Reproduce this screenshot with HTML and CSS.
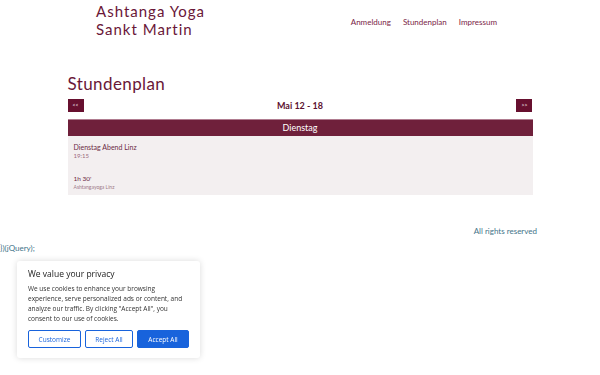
FILE: index.html
```html
<!DOCTYPE html>
<html lang="de">
<head>
	<meta charset="UTF-8">
	<title>Stundenplan - Ashtanga Yoga Sankt Martin</title>
	<link rel="stylesheet" href="styles.css">
</head>
<body>
	<header class="site_header">
		<a class="logo">
			<span>Ashtanga Yoga</span>
			<span>Sankt Martin</span>
		</a>
		<nav class="main_nav">
			<a>Anmeldung</a>
			<a>Stundenplan</a>
			<a>Impressum</a>
		</nav>
	</header>

	<main class="content">
		<h1>Stundenplan</h1>
		<div class="week_nav">
			<a class="week_btn">&lt;&lt;</a>
			<span class="week_label">Mai 12 - 18</span>
			<a class="week_btn">&gt;&gt;</a>
		</div>
		<div class="day">
			<div class="day_title">Dienstag</div>
			<div class="day_body">
				<div class="lesson_name">Dienstag Abend Linz</div>
				<div class="lesson_time">19:15</div>
				<div class="lesson_len">1h 30'</div>
				<div class="lesson_place">Ashtangayoga Linz</div>
			</div>
		</div>
	</main>

	<footer class="site_footer">All rights reserved</footer>
	<div class="stray">})(jQuery);</div>

	<!-- cookie hinweis -->
	<div class="cookie_box">
		<div class="cookie_title">We value your privacy</div>
		<p>We use cookies to enhance your browsing experience, serve personalized ads or content, and analyze our traffic. By clicking "Accept All", you consent to our use of cookies.</p>
		<div class="cookie_btns">
			<button class="btn_line">Customize</button>
			<button class="btn_line">Reject All</button>
			<button class="btn_fill">Accept All</button>
		</div>
	</div>
</body>
</html>
```

FILE: styles.css
```css
*{
	margin:0;
	padding:0;
	box-sizing:border-box;
}
body{
	background:#fff;
	font-family:Lato, "Noto Sans", sans-serif;
	color:#6d1b3b;
	min-height:375px;
}
a{
	text-decoration:none;
	color:inherit;
}
.site_header{
	width:408px;
	margin:0 auto;
	display:flex;
	justify-content:space-between;
	padding-top:2px;
}
.logo{
	display:flex;
	flex-direction:column;
	font-size:15px;
	line-height:18px;
	letter-spacing:1px;
	color:#6a1738;
}
.main_nav{
	display:flex;
	gap:12px;
	padding:15px 7px 0 0;
	font-size:8px;
	color:#7a2546;
}
.content{
	width:465px;
	margin:36px auto 0;
}
.content h1{
	font-size:17px;
	font-weight:normal;
	letter-spacing:0.4px;
	line-height:20px;
	color:#6a1738;
	margin-bottom:5px;
}
.week_nav{
	display:flex;
	justify-content:space-between;
	align-items:center;
	height:13px;
}
.week_btn{
	width:16px;
	height:13px;
	background:#67102f;
	color:#fff;
	font-size:5px;
	line-height:13px;
	text-align:center;
}
.week_label{
	font-size:9px;
	font-weight:bold;
	color:#5c1230;
}
.day{
	margin-top:7px;
}
.day_title{
	height:17px;
	line-height:16px;
	background:#6f203b;
	border-top:1px solid #b07c90;
	color:#fff;
	text-align:center;
	font-size:9px;
}
.day_body{
	background:#f3eff0;
	height:59px;
	padding:6px;
	color:#6b2a44;
}
.lesson_name{
	font-size:7px;
	line-height:10px;
}
.lesson_time{
	font-size:6px;
	line-height:8px;
	color:#9a6a7c;
}
.lesson_len{
	font-size:6.5px;
	line-height:9px;
	margin-top:14px;
}
.lesson_place{
	font-size:5px;
	line-height:9px;
	color:#a07a88;
}
.site_footer{
	width:474px;
	margin:31px auto 0;
	text-align:right;
	font-size:8px;
	color:#3f7489;
}
.stray{
	font-size:8px;
	margin-top:7px;
	color:#3f7489;
}
.cookie_box{
	position:fixed;
	left:17px;
	bottom:17px;
	width:183px;
	height:97px;
	background:#fff;
	border-radius:3px;
	box-shadow:0 0 6px rgba(0,0,0,.15);
	padding:8px 11px;
	color:#212121;
	font-family:"Open Sans", "Noto Sans", sans-serif;
}
.cookie_title{
	font-size:8.5px;
	line-height:10px;
	margin-bottom:5px;
}
.cookie_box p{
	font-size:6.5px;
	line-height:10px;
	color:#333;
}
.cookie_btns{
	display:flex;
	gap:4px;
	margin-top:6px;
}
.cookie_btns button{
	height:18px;
	font-family:inherit;
	font-size:6.5px;
	border-radius:2px;
	cursor:pointer;
	border:1px solid #1863dc;
}
.btn_line{
	background:#fff;
	color:#1863dc;
	width:53px;
}
.btn_line + .btn_line{
	width:48px;
}
.btn_fill{
	background:#1863dc;
	color:#fff;
	width:52px;
}
```
